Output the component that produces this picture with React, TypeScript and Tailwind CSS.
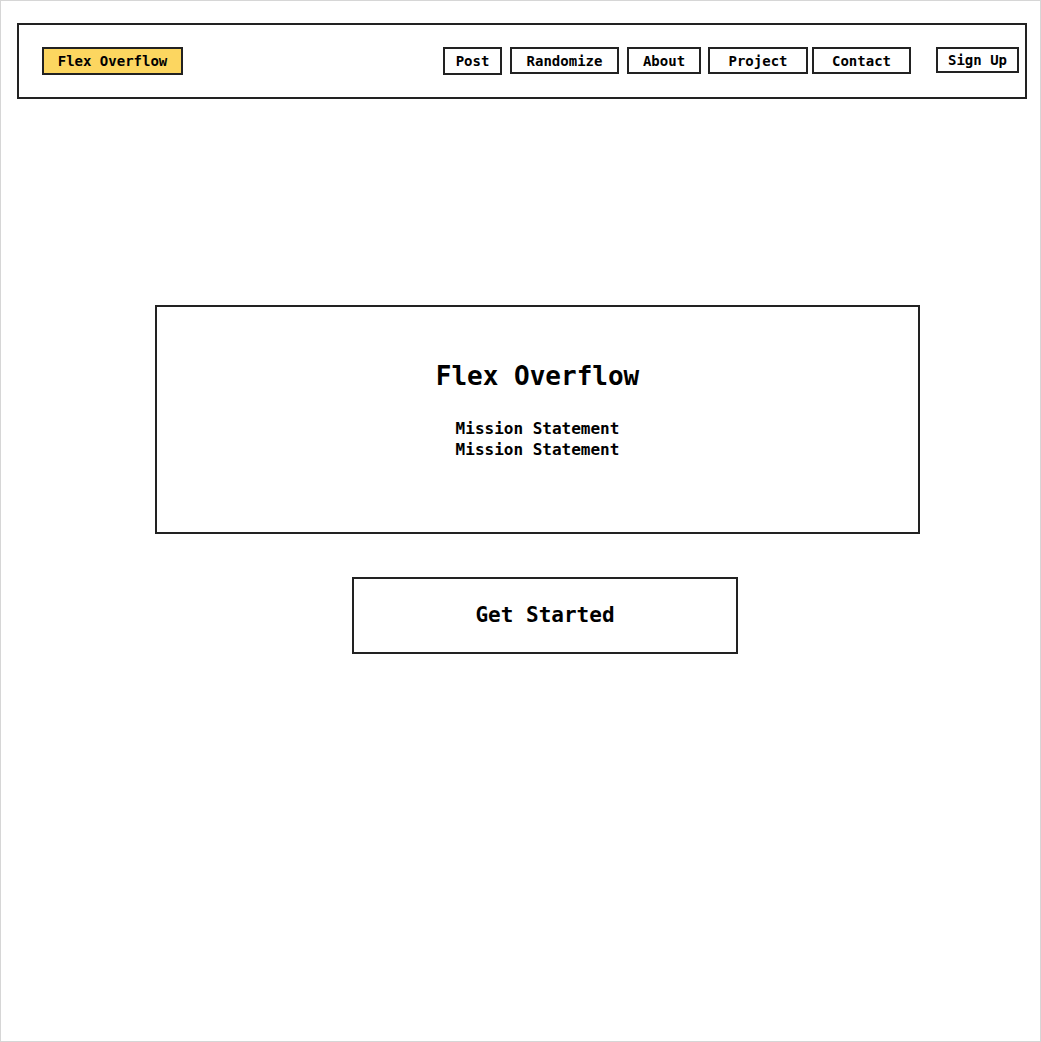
import React from 'react'

const mono = { fontFamily: '"DejaVu Sans Mono", "Liberation Mono", monospace' }

const navItems = [
  { label: 'Post', w: 'w-[59px]', h: 'h-[28px]', ml: 'ml-0' },
  { label: 'Randomize', w: 'w-[109px]', h: 'h-[27px]', ml: 'ml-[8px]' },
  { label: 'About', w: 'w-[74px]', h: 'h-[27px]', ml: 'ml-[8px]' },
  { label: 'Project', w: 'w-[100px]', h: 'h-[27px]', ml: 'ml-[7px]' },
  { label: 'Contact', w: 'w-[99px]', h: 'h-[27px]', ml: 'ml-[4px]' },
  { label: 'Sign Up', w: 'w-[83px]', h: 'h-[26px]', ml: 'ml-[25px]' },
]

export default function App() {
  return (
    <div
      className="w-[1041px] h-[1042px] border border-[#d6d6d6] bg-white text-black overflow-hidden"
      style={mono}
    >
      {/* Header */}
      <header className="mt-[22px] ml-[16px] w-[1010px] h-[76px] border-2 border-[#222] flex items-start pt-[22px] pl-[23px] pr-[6px]">
        <div className="w-[141px] h-[28px] bg-[#fcd660] border-2 border-[#222] flex items-center justify-center text-[14px] font-bold leading-none">
          Flex Overflow
        </div>
        <nav className="ml-auto flex items-start">
          {navItems.map((item) => (
            <button
              key={item.label}
              className={`${item.w} ${item.h} ${item.ml} border-2 border-[#222] bg-white flex items-center justify-center text-[14px] font-bold leading-none`}
            >
              {item.label}
            </button>
          ))}
        </nav>
      </header>

      {/* Hero */}
      <section className="mt-[206px] ml-[154px] w-[765px] h-[229px] border-2 border-[#222] flex flex-col items-center pt-[53px]">
        <h1 className="text-[26px] leading-[32px] font-bold">Flex Overflow</h1>
        <div className="mt-[26px] text-[16px] leading-[21px] font-bold text-center">
          <p>Mission Statement</p>
          <p>Mission Statement</p>
        </div>
      </section>

      <button className="mt-[43px] ml-[351px] w-[386px] h-[77px] border-2 border-[#222] bg-white flex items-center justify-center text-[21px] font-bold leading-none">
        Get Started
      </button>
    </div>
  )
}
